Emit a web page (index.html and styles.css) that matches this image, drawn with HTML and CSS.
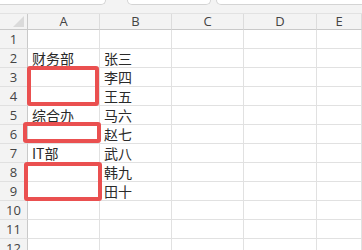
FILE: index.html
```html
<!DOCTYPE html>
<html lang="zh">

<head>
  <meta charset="UTF-8">
  <meta name="viewport" content="width=device-width, initial-scale=1.0">
  <title>Sheet</title>
  <link rel="stylesheet" href="styles.css">
</head>

<body>
  <div class="topbar">
    <div class="tbox tbox-name"></div>
    <div class="tbox tbox-mid"></div>
    <div class="tbox tbox-formula"></div>
  </div>

  <div class="sheet">
    <div class="grid">
      <div class="corner"><span class="tri"></span></div>
      <div class="colhead">A</div>
      <div class="colhead">B</div>
      <div class="colhead">C</div>
      <div class="colhead">D</div>
      <div class="colhead">E</div>

      <div class="rowhead">1</div><div class="cell"></div><div class="cell"></div><div class="cell"></div><div class="cell"></div><div class="cell"></div>
      <div class="rowhead">2</div><div class="cell">财务部</div><div class="cell">张三</div><div class="cell"></div><div class="cell"></div><div class="cell"></div>
      <div class="rowhead">3</div><div class="cell"></div><div class="cell">李四</div><div class="cell"></div><div class="cell"></div><div class="cell"></div>
      <div class="rowhead">4</div><div class="cell"></div><div class="cell">王五</div><div class="cell"></div><div class="cell"></div><div class="cell"></div>
      <div class="rowhead">5</div><div class="cell">综合办</div><div class="cell">马六</div><div class="cell"></div><div class="cell"></div><div class="cell"></div>
      <div class="rowhead">6</div><div class="cell"></div><div class="cell">赵七</div><div class="cell"></div><div class="cell"></div><div class="cell"></div>
      <div class="rowhead">7</div><div class="cell">IT部</div><div class="cell">武八</div><div class="cell"></div><div class="cell"></div><div class="cell"></div>
      <div class="rowhead">8</div><div class="cell"></div><div class="cell">韩九</div><div class="cell"></div><div class="cell"></div><div class="cell"></div>
      <div class="rowhead">9</div><div class="cell"></div><div class="cell">田十</div><div class="cell"></div><div class="cell"></div><div class="cell"></div>
      <div class="rowhead">10</div><div class="cell"></div><div class="cell"></div><div class="cell"></div><div class="cell"></div><div class="cell"></div>
      <div class="rowhead">11</div><div class="cell"></div><div class="cell"></div><div class="cell"></div><div class="cell"></div><div class="cell"></div>
      <div class="rowhead">12</div><div class="cell"></div><div class="cell"></div><div class="cell"></div><div class="cell"></div><div class="cell"></div>
    </div>

    <!-- highlight marks drawn over the empty merged cells -->
    <div class="mark mark-1"></div>
    <div class="mark mark-2"></div>
    <div class="mark mark-3"></div>
  </div>
</body>

</html>
```

FILE: styles.css
```css
* {
  box-sizing: border-box;
}

body {
  margin: 0;
  width: 362px;
  height: 250px;
  overflow: hidden;
  background-color: #fff;
  font-family: "Noto Sans CJK SC", "Noto Sans", sans-serif;
}

.topbar {
  height: 14px;
  background-color: #f3f3f3;
  border-bottom: 1px solid #e2e2e2;
  display: flex;
  align-items: flex-start;
  overflow: hidden;
}

.tbox {
  height: 5px;
  background-color: #fff;
  border: 1px solid #d4d4d4;
  border-top: none;
  border-radius: 0 0 6px 6px;
}

.tbox-name {
  width: 110px;
  margin-left: -4px;
}

.tbox-mid {
  width: 84px;
  margin-left: 21px;
}

.tbox-formula {
  flex: 1;
  margin-left: 5px;
  margin-right: -8px;
}

.sheet {
  position: relative;
}

.grid {
  display: grid;
  grid-template-columns: 28px 72px 72px 72px 73px 45px;
  grid-template-rows: 16px;
  grid-auto-rows: 19px;
}

.corner {
  background-color: #f3f3f3;
  border-right: 1px solid #c9c9c9;
  border-bottom: 1px solid #c9c9c9;
  position: relative;
}

.tri {
  position: absolute;
  right: 3px;
  bottom: 2px;
  width: 0;
  height: 0;
  border-left: 11px solid transparent;
  border-bottom: 11px solid #dadada;
}

.colhead {
  background-color: #f3f3f3;
  border-right: 1px solid #dcdcdc;
  border-bottom: 1px solid #c9c9c9;
  font-family: "Open Sans", "Noto Sans", sans-serif;
  font-size: 13px;
  line-height: 15px;
  color: #444;
  text-align: center;
}

.colhead:last-child {
  text-align: right;
  padding-right: 14px;
}

.rowhead {
  background-color: #f3f3f3;
  border-right: 1px solid #c9c9c9;
  border-bottom: 1px solid #e0e0e0;
  font-family: "Open Sans", "Noto Sans", sans-serif;
  font-size: 13px;
  line-height: 19px;
  color: #444;
  text-align: center;
}

.cell {
  border-right: 1px solid #e1e1e1;
  border-bottom: 1px solid #e1e1e1;
  padding-left: 4px;
  font-size: 14px;
  line-height: 18px;
  color: #2a2a2a;
  white-space: nowrap;
  display: flex;
  align-items: flex-end;
}

.mark {
  position: absolute;
  border: 4px solid #ea5050;
  border-radius: 3px;
}

.mark-1 {
  left: 27px;
  top: 52px;
  width: 72px;
  height: 40px;
}

.mark-2 {
  left: 23px;
  top: 108px;
  width: 78px;
  height: 21px;
}

.mark-3 {
  left: 24px;
  top: 148px;
  width: 78px;
  height: 39px;
}
```
